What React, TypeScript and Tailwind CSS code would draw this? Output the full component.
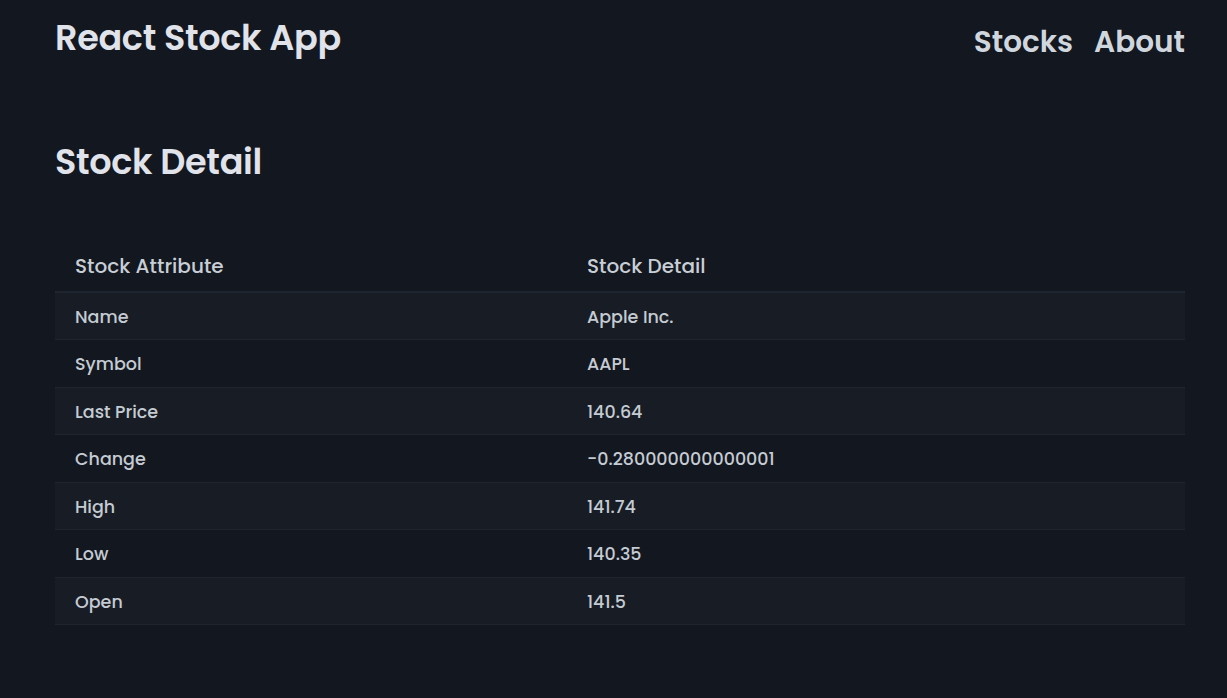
import React from "react";

type TRow = {
  attr: string;
  value: string;
};

const rows: TRow[] = [
  { attr: "Name", value: "Apple Inc." },
  { attr: "Symbol", value: "AAPL" },
  { attr: "Last Price", value: "140.64" },
  { attr: "Change", value: "-0.280000000000001" },
  { attr: "High", value: "141.74" },
  { attr: "Low", value: "140.35" },
  { attr: "Open", value: "141.5" },
];

function App() {
  return (
    <div
      className="min-h-[698px] bg-[#13171f] pl-[55px] pr-[42px] text-[#c5cbd3]"
      style={{ fontFamily: "Poppins, Inter, 'Noto Sans', sans-serif" }}
    >
      <nav className="flex items-start justify-between">
        <h1 className="pt-[14px] text-[35px] font-semibold leading-[48px] tracking-[-0.3px] text-[#e0e3ea]">
          React Stock App
        </h1>
        <ul className="flex gap-[21px] pt-[20px]">
          <li className="text-[29.5px] font-semibold leading-[44px] text-[#d0d6dd]">
            Stocks
          </li>
          <li className="text-[29.5px] font-semibold leading-[44px] text-[#d0d6dd]">
            About
          </li>
        </ul>
      </nav>

      <h2 className="mt-[74px] text-[35px] font-semibold leading-[48px] tracking-[-0.3px] text-[#e0e3ea]">
        Stock Detail
      </h2>

      <table className="mt-[55px] w-full table-fixed border-collapse text-left">
        <thead>
          <tr className="border-b-2 border-[#1e252e]">
            <th className="w-[512px] px-5 pb-[10px] pt-[10px] text-[20px] font-medium text-[#c8ced6]">
              Stock Attribute
            </th>
            <th className="px-5 pb-[10px] pt-[10px] text-[20px] font-medium text-[#c8ced6]">
              Stock Detail
            </th>
          </tr>
        </thead>
        <tbody>
          {rows.map((r, i) => (
            <tr
              key={r.attr}
              className={`border-b border-[#1e252e] ${
                i % 2 === 0 ? "bg-[#181d25]" : "bg-[#13171f]"
              }`}
            >
              <td className="h-[47.5px] px-5 pt-[2px] text-[17.5px] font-medium">{r.attr}</td>
              <td className="h-[47.5px] px-5 pt-[2px] text-[17.5px] font-medium">{r.value}</td>
            </tr>
          ))}
        </tbody>
      </table>
    </div>
  );
}

export default App;
